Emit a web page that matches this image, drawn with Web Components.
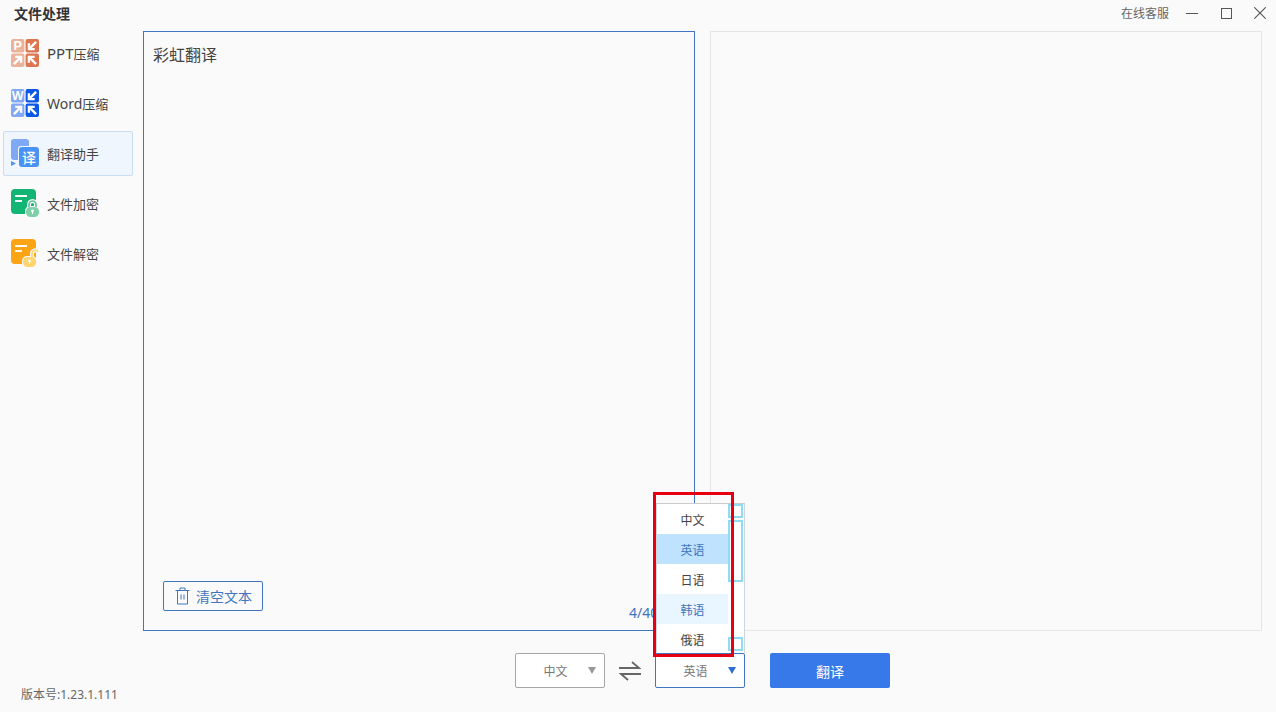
<!DOCTYPE html>
<html lang="zh">
<head>
<meta charset="utf-8">
<title>文件处理</title>
<style>
  html, body { margin: 0; height: 100%; overflow: hidden; background: #fafafa; }
  body { font-family: "Noto Sans", "Noto Sans CJK SC", sans-serif; color: #333; }
</style>
</head>
<body>
<file-app></file-app>

<script>
'use strict'

// маленький помощник: стрелки для иконок сжатия
const arrow = (x, y, rot, color) => `
  <g transform="translate(${x} ${y}) rotate(${rot})">
    <path d="M-3.8 3.8 L2.6 -2.6 M-2.4 -3.4 H3.4 V2.4" fill="none" stroke="${color}" stroke-width="2.4"/>
  </g>`

const compressIcon = (light, dark, letter) => `
  <svg width="28" height="28" viewBox="0 0 28 28">
    <rect x="0" y="0" width="13.4" height="13.4" rx="2" fill="${light}"/>
    <rect x="14.6" y="0" width="13.4" height="13.4" rx="2" fill="${dark}"/>
    <rect x="0" y="14.6" width="13.4" height="13.4" rx="2" fill="${light}"/>
    <rect x="14.6" y="14.6" width="13.4" height="13.4" rx="2" fill="${dark}"/>
    <text x="6.7" y="11.4" text-anchor="middle" font-family="Liberation Sans, sans-serif" font-size="12.5" font-weight="700" fill="#fff">${letter}</text>
    ${arrow(21.3, 6.7, 180, '#fff')}
    ${arrow(6.7, 21.3, 0, '#fff')}
    ${arrow(21.3, 21.3, -90, '#fff')}
  </svg>`

const docIcon = (color, lockColor, open) => `
  <svg width="28" height="28" viewBox="0 0 28 28">
    <rect x="0" y="0" width="25" height="25" rx="4" fill="${color}"/>
    <rect x="4" y="6" width="12" height="2" fill="#fff" opacity=".95"/>
    <rect x="4" y="11" width="7" height="2" fill="#fff" opacity=".95"/>
    ${open
      ? `<path d="M21 18 V14.5 a3.2 3.2 0 0 1 6 -1.5" fill="none" stroke="#fafafa" stroke-width="4"/>
         <rect x="11" y="17" width="15" height="12" rx="5" fill="#fafafa"/>
         <path d="M21 18 V14.5 a3.2 3.2 0 0 1 6 -1.5" fill="none" stroke="${lockColor}" stroke-width="1.6"/>
         <rect x="12" y="18" width="13" height="10" rx="4.5" fill="${lockColor}"/>
         <circle cx="18.5" cy="22" r="1.4" fill="#fff"/>
         <rect x="18" y="22" width="1" height="3" fill="#fff"/>`
      : `<path d="M18 18 V15.5 a3.5 3.5 0 0 1 7 0 V18" fill="none" stroke="#fafafa" stroke-width="4"/>
         <rect x="14" y="17" width="15" height="12" rx="5" fill="#fafafa"/>
         <path d="M18 18 V15.5 a3.5 3.5 0 0 1 7 0 V18" fill="none" stroke="#63c49a" stroke-width="1.7"/>
         <rect x="15" y="18" width="13" height="10" rx="4.5" fill="#7fd0a8"/>
         <circle cx="21.5" cy="22" r="1.4" fill="#fff"/>
         <rect x="21" y="22" width="1" height="3" fill="#fff"/>`}
  </svg>`

const translateIcon = `
  <svg width="28" height="28" viewBox="0 0 28 28">
    <rect x="0" y="0" width="18" height="21" rx="3" fill="#7fa9f5"/>
    <path d="M0 22 L5 24.5 L0 27 Z" fill="#4a93f5"/>
    <rect x="7" y="7" width="21" height="21" rx="3" fill="#eff6fe"/>
    <rect x="8" y="8" width="20" height="20" rx="3" fill="#4a93f5"/>
    <text x="18" y="23.5" text-anchor="middle" font-family="Noto Sans CJK SC, sans-serif" font-size="14" font-weight="500" fill="#fff">译</text>
  </svg>`

class TitleBar extends HTMLElement {
  constructor() {
    super();
    this.attachShadow({mode: 'open'}).innerHTML = `
    <style>
      :host { display: flex; align-items: center; height: 31px; padding: 0 10px 5px 14px; box-sizing: border-box; font-size: 12px; }
      .name { font-weight: 700; font-size: 14px; color: #333; flex: 1; }
      .help { color: #666; margin-right: 17px; }
      svg { display: block; }
      .ctl { display: flex; align-items: center; }
      .max { margin: 0 22px 0 23px; }
    </style>
    <span class="name"><slot></slot></span>
    <span class="help">在线客服</span>
    <span class="ctl">
      <svg width="12" height="12" viewBox="0 0 12 12"><path d="M0 6.5 H12" stroke="#555" stroke-width="1"/></svg>
      <svg class="max" width="11" height="11" viewBox="0 0 11 11"><rect x=".5" y=".5" width="10" height="10" fill="none" stroke="#555"/></svg>
      <svg width="12" height="12" viewBox="0 0 12 12"><path d="M0.3 0.3 L11.7 11.7 M11.7 0.3 L0.3 11.7" stroke="#555" stroke-width="1.1"/></svg>
    </span>`;
  }
}
customElements.define('title-bar', TitleBar);

class NavItem extends HTMLElement {
  constructor() {
    super();
    const icons = {
      ppt: compressIcon('#ecb39c', '#dd7550', 'P'),
      word: compressIcon('#82a9f6', '#0b57e6', 'W'),
      translate: translateIcon,
      lock: docIcon('#12b573', '', false),
      unlock: docIcon('#fca413', '#ffd36e', true),
    };
    this.attachShadow({mode: 'open'}).innerHTML = `
    <style>
      :host { display: flex; align-items: center; height: 45px; box-sizing: border-box; padding: 0 0 1px 7px; border: 1px solid transparent; border-radius: 2px; font-size: 13px; color: #444; }
      :host([active]) { background: #eff6fe; border-color: #c7ddf5; }
      .icon { width: 36px; height: 28px; display: flex; align-items: center; flex: none; }
      svg { display: block; }
    </style>
    <span class="icon">${icons[this.getAttribute('icon')]}</span>
    <slot></slot>`;
  }
}
customElements.define('nav-item', NavItem);

class SideNav extends HTMLElement {
  constructor() {
    super();
    this.attachShadow({mode: 'open'}).innerHTML = `
    <style>
      :host { display: flex; flex-direction: column; gap: 5px; width: 130px; margin: 0 10px 0 3px; }
    </style>
    <slot></slot>`;
  }
}
customElements.define('side-nav', SideNav);

class TextPane extends HTMLElement {
  constructor() {
    super();
    this.attachShadow({mode: 'open'}).innerHTML = `
    <style>
      :host { display: block; position: relative; width: 552px; height: 600px; box-sizing: border-box; border: 1px solid #e6e6e6; background: #fafafa; }
      :host([focused]) { border-color: #3f76bf; }
      .text { padding: 12px 9px; font-size: 16px; line-height: 22px; color: #444; }
      .tools { position: absolute; left: 19px; bottom: 19px; }
      .count { position: absolute; right: 0; bottom: 8px; width: 65px; font-size: 14px; color: #3f76bf; white-space: nowrap; overflow: hidden; }
    </style>
    <div class="text"><slot></slot></div>
    <div class="tools"><slot name="tools"></slot></div>
    <div class="count"><slot name="count"></slot></div>`;
  }
}
customElements.define('text-pane', TextPane);

class ClearButton extends HTMLElement {
  constructor() {
    super();
    this.attachShadow({mode: 'open'}).innerHTML = `
    <style>
      :host { display: flex; align-items: center; width: 100px; height: 30px; box-sizing: border-box; padding-left: 11px; gap: 6px; border: 1px solid #3f76bf; border-radius: 2px; font-size: 14px; color: #3f76bf; }
      svg { display: block; }
    </style>
    <svg width="15" height="18" viewBox="0 0 15 18" fill="none" stroke="#3f76bf" stroke-width="1">
      <path d="M0.5 3.5 H14.5 M5 3.5 V1 H10 V3.5 M2.5 3.5 V17 H12.5 V3.5 M6 7.5 V12.5 M9 7.5 V12.5"/>
    </svg>
    <slot></slot>`;
  }
}
customElements.define('clear-button', ClearButton);

class LangSelect extends HTMLElement {
  constructor() {
    super();
    this.attachShadow({mode: 'open'}).innerHTML = `
    <style>
      :host { display: flex; align-items: center; position: relative; width: 90px; height: 35px; box-sizing: border-box; padding-top: 1px; border: 1px solid #a6a6a6; border-radius: 2px; background: #fff; font-size: 12px; color: #777; }
      :host([open]) { border-color: #3f76bf; }
      .val { width: 79px; text-align: center; }
      .tri { position: absolute; right: 8px; top: 13px; width: 0; height: 0; border: 4px solid transparent; border-top: 7px solid #999; border-bottom: 0; }
      :host([open]) .tri { border-top-color: #2f6fd0; }
    </style>
    <span class="val"><slot></slot></span>
    <span class="tri"></span>`;
  }
}
customElements.define('lang-select', LangSelect);

class LangMenu extends HTMLElement {
  constructor() {
    super();
    this.attachShadow({mode: 'open'}).innerHTML = `
    <style>
      /* выпадающий список лежит поверх панелей */
      :host { display: flex; position: absolute; left: 656px; top: 503px; width: 89px; height: 150px; box-sizing: border-box; background: #fff; border: 1px solid #ccd6de; border-bottom: 0; border-top-color: #ccc; z-index: 2; overflow: hidden; }
      .list { width: 71px; flex: none; }
      .bar { position: relative; flex: 1; background: #fff; }
      .bar i { position: absolute; left: 0; right: 1px; box-sizing: border-box; border: 2px solid #8fdcf2; }
    </style>
    <div class="list"><slot></slot></div>
    <div class="bar">
      <i style="top:0;height:14px"></i>
      <i style="top:16px;height:62px"></i>
      <i style="top:133px;height:14px"></i>
    </div>`;
  }
}
customElements.define('lang-menu', LangMenu);

class LangOption extends HTMLElement {
  constructor() {
    super();
    this.attachShadow({mode: 'open'}).innerHTML = `
    <style>
      :host { display: flex; align-items: center; justify-content: center; height: 30px; box-sizing: border-box; padding-top: 2px; font-size: 12px; color: #444; }
      :host([selected]) { background: #bfe2ff; color: #3f76bf; }
      :host([hover]) { background: #e9f5ff; color: #3f76bf; }
    </style>
    <slot></slot>`;
  }
}
customElements.define('lang-option', LangOption);

class RedMark extends HTMLElement {
  constructor() {
    super();
    this.attachShadow({mode: 'open'}).innerHTML = `
    <style>
      /* красная рамка-пометка поверх скриншота */
      :host { display: block; position: absolute; left: 653px; top: 492px; width: 81px; height: 165px; box-sizing: border-box; border: 3px solid #e60012; z-index: 3; pointer-events: none; }
    </style>`;
  }
}
customElements.define('red-mark', RedMark);

class FileApp extends HTMLElement {
  constructor() {
    super();
    this.attachShadow({mode: 'open'}).innerHTML = `
    <style>
      :host { display: block; position: relative; width: 1276px; height: 712px; background: #fafafa; overflow: hidden; }
      .main { display: flex; align-items: flex-start; }
      .panes { display: flex; gap: 15px; }
      .foot { display: flex; align-items: flex-start; height: 81px; padding-top: 22px; box-sizing: border-box; }
      .ver { width: 494px; margin-left: 21px; align-self: flex-end; padding-bottom: 8px; font-size: 12px; line-height: 18px; color: #666; }
      .swap { width: 50px; height: 35px; display: flex; justify-content: center; align-items: center; }
      .go { display: flex; align-items: center; justify-content: center; width: 120px; height: 35px; margin-left: 25px; background: #3779e8; border-radius: 2px; color: #fff; font-size: 14px; }
      svg { display: block; }
    </style>
    <title-bar>文件处理</title-bar>
    <div class="main">
      <side-nav>
        <nav-item icon="ppt"><span style="font-size:15px">PPT</span>压缩</nav-item>
        <nav-item icon="word"><span style="font-size:14px">Word</span>压缩</nav-item>
        <nav-item icon="translate" active>翻译助手</nav-item>
        <nav-item icon="lock">文件加密</nav-item>
        <nav-item icon="unlock">文件解密</nav-item>
      </side-nav>
      <div class="panes">
        <text-pane focused>
          彩虹翻译
          <clear-button slot="tools">清空文本</clear-button>
          <span slot="count">4/4000</span>
        </text-pane>
        <text-pane></text-pane>
      </div>
    </div>
    <div class="foot">
      <div class="ver">版本号:1.23.1.111</div>
      <lang-select>中文</lang-select>
      <span class="swap">
        <svg width="22" height="20" viewBox="0 0 22 20" fill="none" stroke="#666" stroke-width="1.8">
          <path d="M0 7 H20 L13 1 M22 13 H2 L9 19"/>
        </svg>
      </span>
      <lang-select open>英语</lang-select>
      <span class="go">翻译</span>
    </div>
    <lang-menu>
      <lang-option>中文</lang-option>
      <lang-option selected>英语</lang-option>
      <lang-option>日语</lang-option>
      <lang-option hover>韩语</lang-option>
      <lang-option>俄语</lang-option>
    </lang-menu>
    <red-mark></red-mark>`;
  }
}
customElements.define('file-app', FileApp);
</script>
</body>
</html>
